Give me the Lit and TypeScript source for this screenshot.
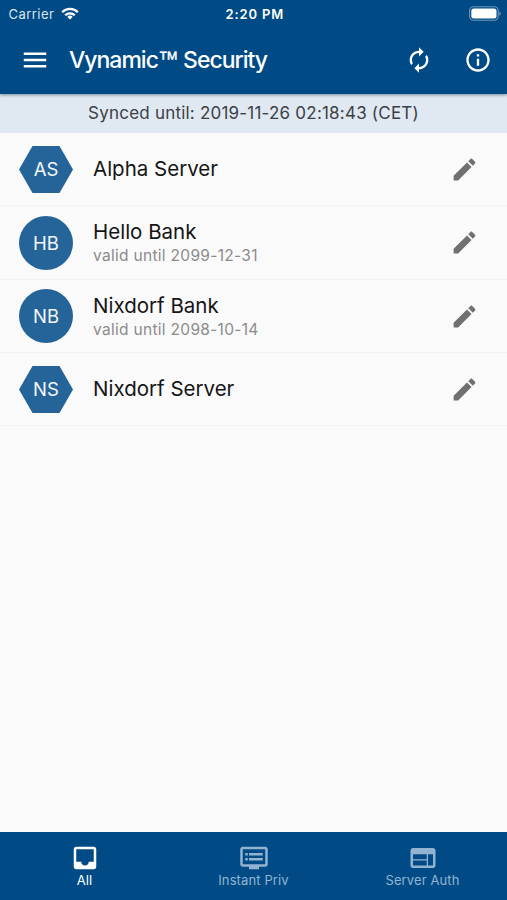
import { LitElement, html, css, svg } from "lit";
import { customElement, property } from "lit/decorators.js";
import { classMap } from "lit/directives/class-map.js";

const ICONS: Record<string, string> = {
  menu: "M3 18h18v-2H3v2zm0-5h18v-2H3v2zm0-7v2h18V6H3z",
  renew:
    "M12 6v3l4-4-4-4v3c-4.42 0-8 3.58-8 8 0 1.57.46 3.03 1.24 4.26L6.7 14.8c-.45-.83-.7-1.79-.7-2.8 0-3.31 2.69-6 6-6zm6.76 1.74L17.3 9.2c.44.84.7 1.79.7 2.8 0 3.31-2.69 6-6 6v-3l-4 4 4 4v-3c4.42 0 8-3.58 8-8 0-1.57-.46-3.03-1.24-4.26z",
  info:
    "M11 7h2v2h-2zm0 4h2v6h-2zm1-9C6.48 2 2 6.48 2 12s4.48 10 10 10 10-4.48 10-10S17.52 2 12 2zm0 18c-4.41 0-8-3.59-8-8s3.59-8 8-8 8 3.59 8 8-3.59 8-8 8z",
  edit:
    "M3 17.25V21h3.75L17.81 9.94l-3.75-3.75L3 17.25zM20.71 7.04c.39-.39.39-1.02 0-1.41l-2.34-2.34c-.39-.39-1.02-.39-1.41 0l-1.83 1.83 3.75 3.75 1.83-1.83z",
  inbox:
    "M19 3H4.99c-1.11 0-1.98.89-1.98 2L3 19c0 1.1.88 2 1.99 2H19c1.1 0 2-.9 2-2V5c0-1.11-.9-2-2-2zm0 12h-4c0 1.66-1.35 3-3 3s-3-1.34-3-3H4.99V5H19v10z",
  dvr:
    "M21 3H3c-1.1 0-2 .9-2 2v12c0 1.1.9 2 2 2h5v2h8v-2h5c1.1 0 1.99-.9 1.99-2L23 5c0-1.1-.9-2-2-2zm0 14H3V5h18v12zm-2-9H8v2h11V8zm0 4H8v2h11v-2zM7 8H5v2h2V8zm0 4H5v2h2v-2z",
  web:
    "M20 4H4c-1.1 0-1.99.9-1.99 2L2 18c0 1.1.9 2 2 2h16c1.1 0 2-.9 2-2V6c0-1.1-.9-2-2-2zm-5 14H4v-4h11v4zm0-5H4V9h11v4zm5 5h-4V9h4v9z",
};

@customElement("ui-icon")
export class UiIcon extends LitElement {
  @property() name = "menu";
  static styles = css`
    :host { display: block; width: 30px; height: 30px; flex: none; }
    svg { display: block; width: 100%; height: 100%; fill: currentColor; }
  `;
  render() {
    return html`<svg viewBox="0 0 24 24">${svg`<path d=${ICONS[this.name]}></path>`}</svg>`;
  }
}

interface Account {
  initials: string;
  name: string;
  server: boolean;
  valid?: string;
}

@customElement("account-row")
export class AccountRow extends LitElement {
  @property({ attribute: false }) account!: Account;
  static styles = css`
    :host {
      display: flex;
      align-items: center;
      box-sizing: border-box;
      height: 73.33px;
      padding: 0.6px 28.5px 0 19px;
      border-bottom: 1px solid #f2f2f2;
    }
    .avatar {
      flex: none;
      width: 54px;
      height: 54px;
      display: flex;
      align-items: center;
      justify-content: center;
      border-radius: 50%;
      background: #246499;
      color: #f4f8fb;
      font-size: 18.5px;
    }
    .hex {
      height: 47px;
      border-radius: 0;
      clip-path: polygon(25% 0, 75% 0, 100% 50%, 75% 100%, 25% 100%, 0 50%);
    }
    .text { flex: 1; margin-left: 20px; white-space: nowrap; }
    .name { font-size: 20.5px; line-height: 26px; letter-spacing: 0; color: #151515; }
    .valid { font-size: 15.5px; line-height: 21px; letter-spacing: 0.3px; color: #8b8b8b; }
    .lone { padding-bottom: 1px; }
    ui-icon { width: 29px; height: 29px; color: #707070; }
  `;
  render() {
    const a = this.account;
    return html`
      <div class=${classMap({ avatar: true, hex: a.server })}>${a.initials}</div>
      <div class=${classMap({ text: true, lone: !a.valid })}>
        <div class="name">${a.name}</div>
        ${a.valid ? html`<div class="valid">valid until ${a.valid}</div>` : null}
      </div>
      <ui-icon name="edit"></ui-icon>
    `;
  }
}

@customElement("app-root")
export class AppRoot extends LitElement {
  private accounts: Account[] = [
    { initials: "AS", name: "Alpha Server", server: true },
    { initials: "HB", name: "Hello Bank", server: false, valid: "2099-12-31" },
    { initials: "NB", name: "Nixdorf Bank", server: false, valid: "2098-10-14" },
    { initials: "NS", name: "Nixdorf Server", server: true },
  ];
  private tabs = [
    { icon: "inbox", label: "All", active: true },
    { icon: "dvr", label: "Instant Priv", active: false },
    { icon: "web", label: "Server Auth", active: false },
  ];

  static styles = css`
    :host {
      display: flex;
      flex-direction: column;
      width: 507px;
      height: 900px;
      overflow: hidden;
      background: #fafafa;
      font-family: Inter, "Liberation Sans", sans-serif;
    }
    header {
      height: 94px;
      flex: none;
      background: #004b85;
      color: #fff;
      box-shadow: 0 1px 3px rgba(0, 30, 60, 0.45);
      z-index: 1;
    }
    .status {
      display: grid;
      grid-template-columns: 1fr auto 1fr;
      align-items: center;
      height: 27px;
      padding: 0 6px 0 8.5px;
      font-size: 13px;
    }
    .carrier { display: flex; align-items: center; gap: 7px; color: #dbe6ef; letter-spacing: 0.45px; }
    .wifi { width: 18px; height: 13px; display: block; }
    .time { font-weight: 600; letter-spacing: 0.85px; }
    .battery { justify-self: end; width: 32px; height: 15px; display: block; }
    .bar {
      display: flex;
      align-items: center;
      height: 66px;
      padding: 0 15.5px 0 20px;
    }
    h1 {
      flex: 1;
      margin: 0 0 0 19px;
      font-size: 23px;
      font-weight: 500;
      line-height: 28px;
      letter-spacing: -1px;
      white-space: nowrap;
    }
    .tm {
      font-family: "Liberation Sans", sans-serif;
      font-size: 21px;
      line-height: 1;
      letter-spacing: -1px;
      vertical-align: 2px;
      -webkit-text-stroke: 0.3px #fff;
    }
    .action { width: 28px; height: 28px; margin-left: 30.5px; }
    .sync {
      display: flex;
      align-items: center;
      justify-content: center;
      flex: none;
      height: 38px;
      padding-bottom: 1px;
      background: #e0e8f1;
      color: #3b4046;
      font-size: 17px;
      letter-spacing: 0.21px;
      white-space: nowrap;
    }
    main { flex: 1; }
    nav {
      flex: none;
      display: grid;
      grid-template-columns: repeat(3, 1fr);
      height: 68px;
      background: #004b85;
    }
    .tab {
      display: flex;
      flex-direction: column;
      align-items: center;
      padding-top: 11px;
      color: #92b4d1;
      font-size: 13px;
      line-height: 14px;
      letter-spacing: 0.12px;
    }
    .active { color: #fff; }
  `;

  render() {
    return html`
      <header>
        <div class="status">
          <div class="carrier">
            <span>Carrier</span>
            <svg class="wifi" viewBox="0 0 18 13" fill="none" stroke="#fff" stroke-width="2.3">
              <path d="M1.2 5.2a11 11 0 0 1 15.6 0"></path>
              <path d="M4.2 8.3a6.8 6.8 0 0 1 9.6 0"></path>
              <path d="M9 12.6 6.3 9.9a3.8 3.8 0 0 1 5.4 0z" fill="#fff" stroke="none"></path>
            </svg>
          </div>
          <div class="time">2:20 PM</div>
          <svg class="battery" viewBox="0 0 32 15">
            <rect x="0.6" y="0.8" width="28.6" height="13.4" rx="4" fill="none" stroke="#6e98bc" stroke-width="1.1"></rect>
            <rect x="2.3" y="2.5" width="25.2" height="10" rx="2.5" fill="#fff"></rect>
            <path d="M30.3 5.2c1.8.8 1.8 3.8 0 4.6z" fill="#6e98bc"></path>
          </svg>
        </div>
        <div class="bar">
          <ui-icon name="menu"></ui-icon>
          <h1>Vynamic<span class="tm">™</span> Security</h1>
          <ui-icon class="action" name="renew"></ui-icon>
          <ui-icon class="action" name="info"></ui-icon>
        </div>
      </header>
      <div class="sync">Synced until: 2019-11-26 02:18:43 (CET)</div>
      <main>${this.accounts.map((a) => html`<account-row .account=${a}></account-row>`)}</main>
      <nav>
        ${this.tabs.map(
          (t) => html`<div class=${classMap({ tab: true, active: t.active })}>
            <ui-icon name=${t.icon}></ui-icon><span>${t.label}</span>
          </div>`
        )}
      </nav>
    `;
  }
}
